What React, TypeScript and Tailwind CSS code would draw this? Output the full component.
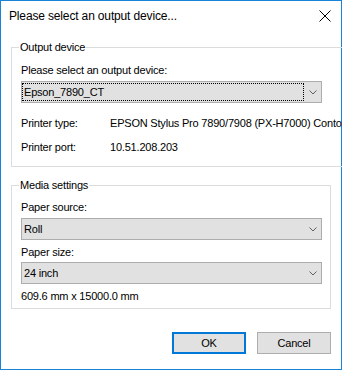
import React from "react";

function Chevron() {
  return (
    <svg width="8" height="5" viewBox="0 0 8 5" className="shrink-0">
      <path d="M0.5 0.5 L4 4 L7.5 0.5" fill="none" stroke="#606060" strokeWidth="1" />
    </svg>
  );
}

function Select({ value, focused }: { value: string; focused?: boolean }) {
  return (
    <div className="flex h-[22px] w-[301px] items-center border border-[#adadad] bg-[#e1e1e1] pr-[4px]">
      <div
        className={
          focused
            ? "mr-[5px] flex h-[18px] flex-1 items-center border border-dotted border-black pl-[1px]"
            : "mr-[5px] flex h-[18px] flex-1 items-center border border-transparent pl-[1px]"
        }
      >
        <span className="leading-[16px]">{value}</span>
      </div>
      <Chevron />
    </div>
  );
}

export default function App() {
  return (
    <div
      className="flex h-[370px] w-[342px] flex-col border border-[#1883d7] bg-white text-[11px] leading-[16px] tracking-[-0.2px] text-black"
      style={{ fontFamily: '"Liberation Sans", Arial, sans-serif' }}
    >
      <div className="flex h-[29px] items-center justify-between pl-[8px] pr-[10px]">
        <span className="text-[12px] leading-[16px] tracking-[-0.15px]">Please select an output device...</span>
        <svg width="12" height="12" viewBox="0 0 12 12">
          <path d="M0.5 0.5 L11.5 11.5 M11.5 0.5 L0.5 11.5" stroke="#000" strokeWidth="1" fill="none" />
        </svg>
      </div>

      <div className="flex flex-col px-[10px]">
        <fieldset className="mt-[9px] border border-[#dcdcdc] pb-[11px] pl-[9px] pr-[8px]">
          <legend className="ml-[-2px] px-[1px] leading-[16px]">Output device</legend>
          <div className="mt-[7px]">Please select an output device:</div>
          <div className="mt-[3px]">
            <Select value="Epson_7890_CT" focused />
          </div>
          <div className="mr-[-8px] mt-[12px] flex overflow-hidden whitespace-nowrap">
            <span className="w-[89px] shrink-0">Printer type:</span>
            <span>EPSON Stylus Pro 7890/7908 (PX-H7000) Contone</span>
          </div>
          <div className="mt-[8px] flex">
            <span className="w-[89px] shrink-0">Printer port:</span>
            <span>10.51.208.203</span>
          </div>
        </fieldset>

        <fieldset className="mt-[10px] border border-[#dcdcdc] pb-[4px] pl-[9px] pr-[8px]">
          <legend className="ml-[-2px] px-[1px] leading-[16px]">Media settings</legend>
          <div className="mt-[6px]">Paper source:</div>
          <div className="mt-[3px]">
            <Select value="Roll" />
          </div>
          <div className="mt-[4px]">Paper size:</div>
          <div className="mt-[2px]">
            <Select value="24 inch" />
          </div>
          <div className="mt-[4px]">609.6 mm x 15000.0 mm</div>
        </fieldset>
      </div>

      <div className="mt-[23px] flex justify-end gap-[11px] pr-[10px]">
        <button className="flex h-[22px] w-[74px] items-center justify-center border-2 border-[#0078d7] bg-[#e1e1e1]">
          OK
        </button>
        <button className="flex h-[22px] w-[74px] items-center justify-center border border-[#adadad] bg-[#e1e1e1]">
          Cancel
        </button>
      </div>
    </div>
  );
}
